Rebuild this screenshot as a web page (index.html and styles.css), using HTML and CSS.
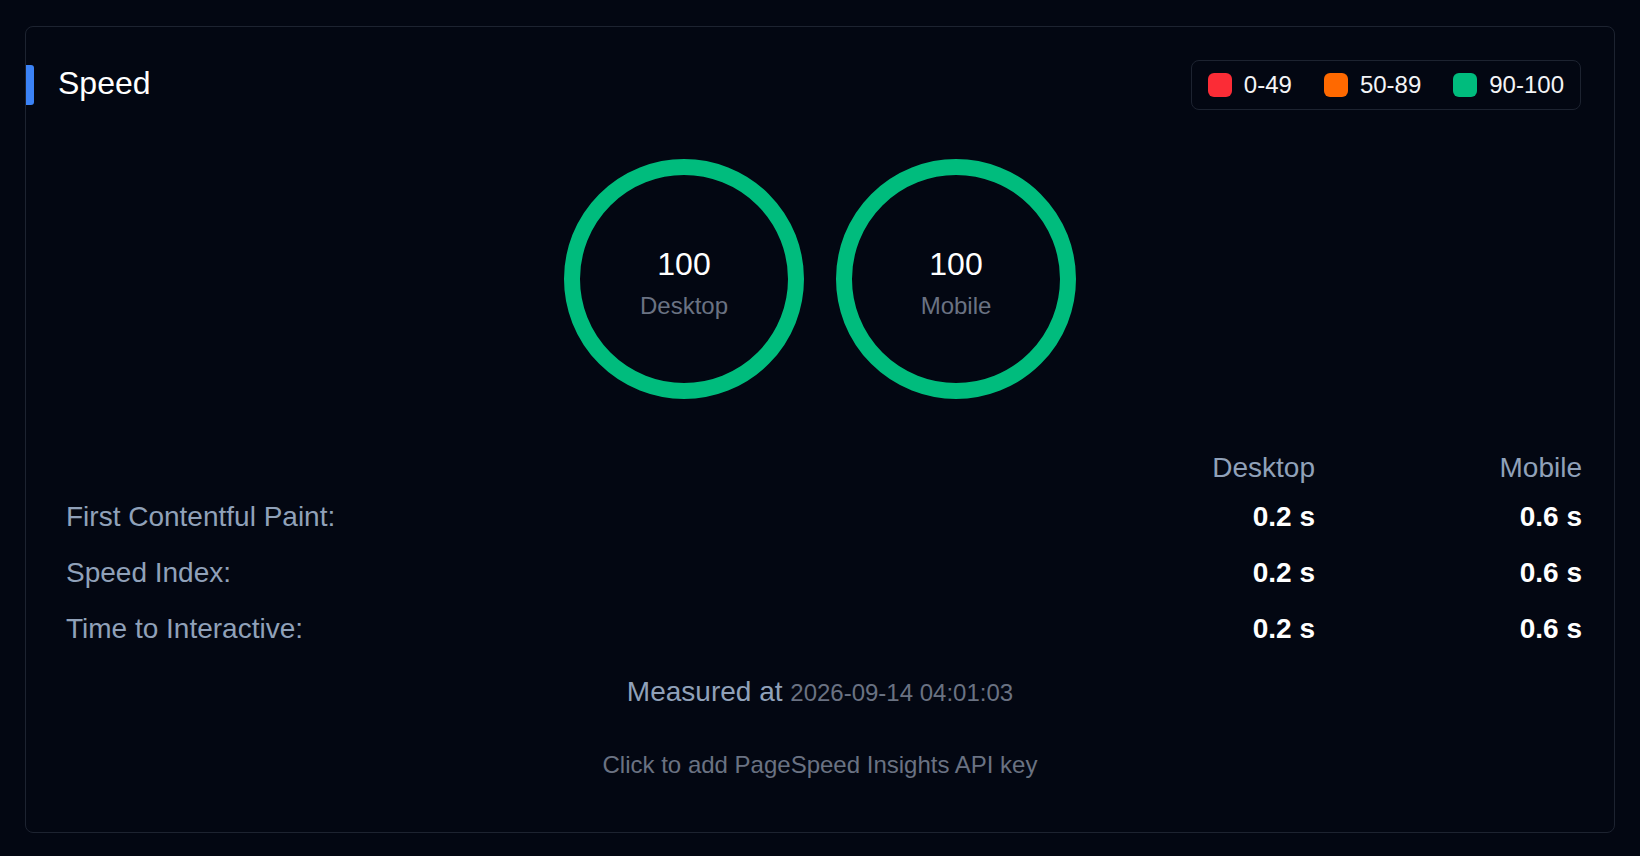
FILE: index.html
```html
<!DOCTYPE html>
<html lang="en">
<head>
<meta charset="utf-8">
<title>Speed</title>
<link rel="stylesheet" href="styles.css">
</head>
<body>
<main class="page">
  <section class="card">
    <header class="card-head">
      <h2 class="title">Speed</h2>
      <ul class="legend">
        <li class="legend-item"><span class="swatch swatch-red"></span>0-49</li>
        <li class="legend-item"><span class="swatch swatch-orange"></span>50-89</li>
        <li class="legend-item"><span class="swatch swatch-green"></span>90-100</li>
      </ul>
    </header>

    <div class="gauges">
      <div class="gauge">
        <div class="gauge-inner">
          <span class="gauge-score">100</span>
          <span class="gauge-label">Desktop</span>
        </div>
      </div>
      <div class="gauge">
        <div class="gauge-inner">
          <span class="gauge-score">100</span>
          <span class="gauge-label">Mobile</span>
        </div>
      </div>
    </div>

    <div class="metrics">
      <div class="metrics-head">
        <span></span>
        <span class="col">Desktop</span>
        <span class="col">Mobile</span>
      </div>
      <div class="metric-row">
        <span class="metric-name">First Contentful Paint:</span>
        <span class="metric-val">0.2 s</span>
        <span class="metric-val">0.6 s</span>
      </div>
      <div class="metric-row">
        <span class="metric-name">Speed Index:</span>
        <span class="metric-val">0.2 s</span>
        <span class="metric-val">0.6 s</span>
      </div>
      <div class="metric-row">
        <span class="metric-name">Time to Interactive:</span>
        <span class="metric-val">0.2 s</span>
        <span class="metric-val">0.6 s</span>
      </div>
    </div>

    <p class="measured">Measured at <span class="measured-date">2026-09-14 04:01:03</span></p>
    <p class="api-key">Click to add PageSpeed Insights API key</p>
  </section>
</main>
</body>
</html>
```
FILE: styles.css
```css
* { box-sizing: border-box; }

html, body {
  margin: 0;
  padding: 0;
  background: #030712;
  font-family: "Liberation Sans", Arial, sans-serif;
  color: #f3f4f6;
}

.page {
  padding: 26px 25px 23px;
  height: 856px;
}

.card {
  position: relative;
  height: 807px;
  border: 1px solid #1d2330;
  border-radius: 8px;
  padding: 30px 32px 32px;
  display: flex;
  flex-direction: column;
}

.card-head {
  position: relative;
  height: 56px;
  display: flex;
  align-items: center;
  justify-content: space-between;
}

.card-head::before {
  content: "";
  position: absolute;
  left: -32px;
  top: 8px;
  width: 8px;
  height: 40px;
  background: #3b82f6;
  border-radius: 0 3px 3px 0;
}

.title {
  margin: 0;
  font-size: 32px;
  font-weight: 400;
  line-height: 40px;
  color: #ffffff;
  padding-bottom: 4px;
}

.legend {
  list-style: none;
  margin: 0 1px 0 0;
  height: 50px;
  padding: 0 16px;
  border: 1px solid #1d2330;
  border-radius: 8px;
  display: flex;
  align-items: center;
  gap: 32px;
}

.legend-item {
  display: flex;
  align-items: center;
  gap: 12px;
  font-size: 24px;
  line-height: 32px;
  color: #f3f4f6;
}

.swatch {
  width: 24px;
  height: 24px;
  border-radius: 6px;
  display: inline-block;
}
.swatch-red { background: #fb2c36; }
.swatch-orange { background: #ff6900; }
.swatch-green { background: #00bc7d; }

.gauges {
  margin-top: 46px;
  display: flex;
  justify-content: center;
  gap: 32px;
}

.gauge {
  width: 240px;
  height: 240px;
  border: 16px solid #00bc7d;
  border-radius: 50%;
  display: flex;
  align-items: center;
  justify-content: center;
  padding-top: 12px;
}

.gauge-inner {
  display: flex;
  flex-direction: column;
  align-items: center;
}

.gauge-score {
  font-size: 32px;
  line-height: 40px;
  color: #ffffff;
}

.gauge-label {
  margin-top: 2px;
  font-size: 24px;
  line-height: 40px;
  color: #6a7282;
}

.metrics {
  margin-top: 49px;
  padding-left: 8px;
  font-size: 28px;
}

.metrics-head,
.metric-row {
  display: grid;
  grid-template-columns: 1fr 268px 267px;
}

.metrics-head {
  height: 41px;
  line-height: 40px;
  color: #90a1b9;
}

.metric-row {
  line-height: 56px;
}

.col,
.metric-val {
  text-align: right;
}

.metric-name {
  color: #90a1b9;
}

.metric-val {
  font-weight: 700;
  color: #ffffff;
}

.measured {
  margin: 15px 0 0;
  text-align: center;
  font-size: 28px;
  line-height: 40px;
  color: #90a1b9;
}

.measured-date {
  font-size: 24px;
  color: #6a7282;
}

.api-key {
  margin: 36px 0 0;
  text-align: center;
  font-size: 24px;
  line-height: 32px;
  color: #6a7282;
  cursor: pointer;
}
```
